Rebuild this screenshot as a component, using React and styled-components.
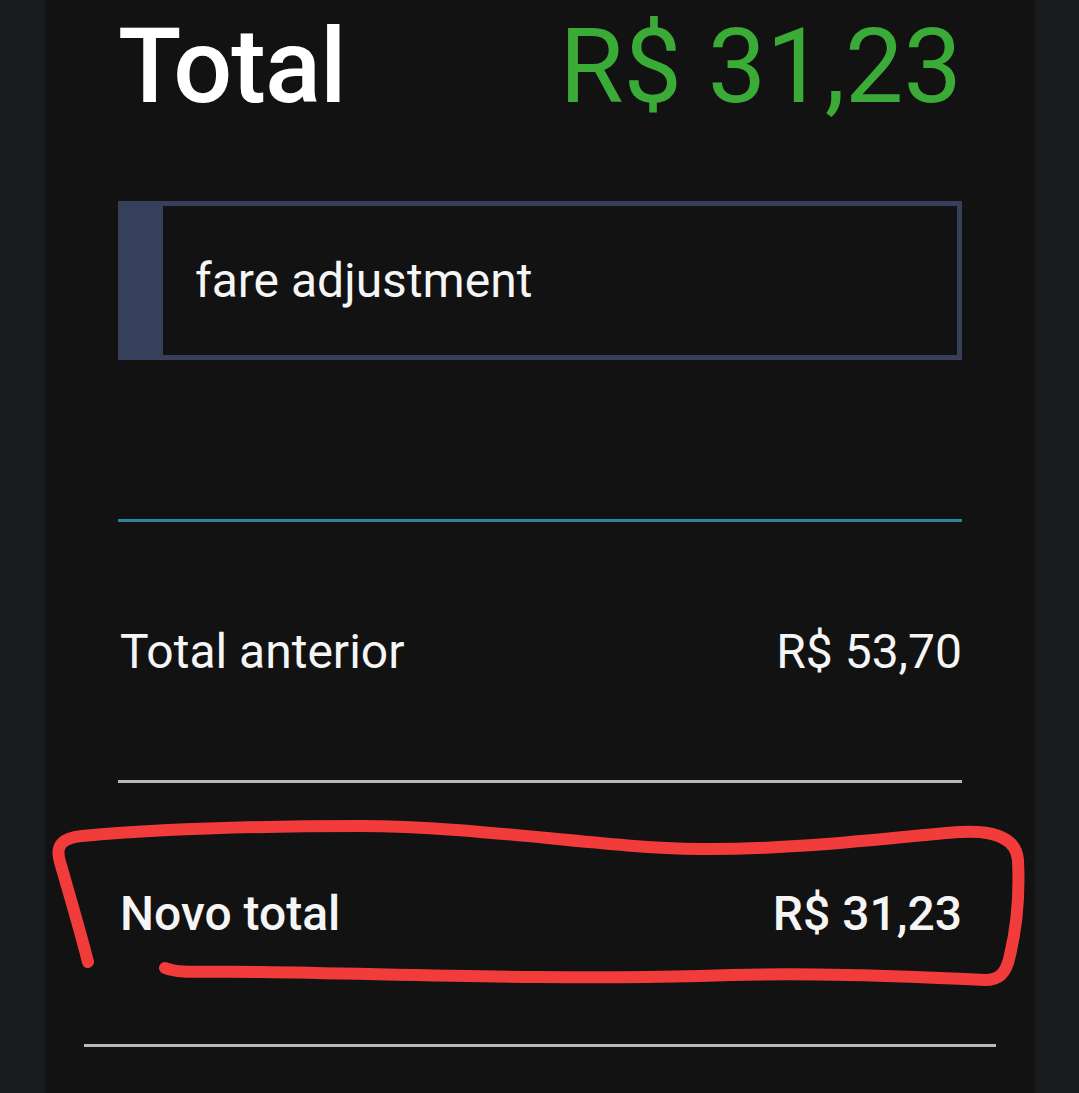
import React from 'react'
import styled, {createGlobalStyle} from 'styled-components'

const GlobalStyle = createGlobalStyle`
  html, body {
    margin: 0;
    padding: 0;
    background: #191c1f;
  }
  body {
    font-family: Roboto, "Liberation Sans", sans-serif;
    color: #f5f5f5;
  }
`

const Page = styled.div`
  position: relative;
  width: 1079px;
  height: 1093px;
  overflow: hidden;
`

const Column = styled.main`
  margin: 0 44px 0 45px;
  height: 1093px;
  background: #121212;
  padding: 15px 73px 0;
  box-sizing: border-box;
  display: flex;
  flex-direction: column;
`

const Header = styled.div`
  display: flex;
  justify-content: space-between;
  align-items: baseline;
  font-size: 104px;
  line-height: 104px;
`

const Title = styled.h1`
  margin: 0;
  font-size: inherit;
  font-weight: 500;
  color: #ffffff;
  letter-spacing: -1px;
`

const Amount = styled.span`
  color: #3aab36;
  font-weight: 400;
`

const Note = styled.div`
  margin-top: 82px;
  height: 159px;
  box-sizing: border-box;
  border: 5px solid #36405a;
  border-left-width: 45px;
  display: flex;
  align-items: center;
  padding-left: 32px;
  font-size: 48px;
  color: #f5f5f5;
  background: #121212;
`

const Spacer = styled.div`
  height: ${p => p.$height}px;
`

const Divider = styled.hr`
  margin: 0 ${p => p.$bleed || 0}px;
  border: none;
  height: 3px;
  background: ${p => p.$color};
`

const Row = styled.div`
  height: ${p => p.$height}px;
  display: flex;
  justify-content: space-between;
  align-items: center;
  font-size: 48px;
  font-weight: ${p => (p.$strong ? 500 : 400)};
  color: #f5f5f5;
  padding: 0 0 0 2px;
`

const Scribble = styled.svg`
  position: absolute;
  left: 0;
  top: 0;
  pointer-events: none;
`

export default function App() {
  return (
    <Page>
      <GlobalStyle />
      <Column>
        <Header>
          <Title>Total</Title>
          <Amount>R$ 31,23</Amount>
        </Header>
        <Note>fare adjustment</Note>
        <Spacer $height={159} />
        <Divider $color="#2a8699" />
        <Row $height={258}>
          <span>Total anterior</span>
          <span>R$ 53,70</span>
        </Row>
        <Divider $color="#b9b9b9" />
        <Row $height={261} $strong>
          <span>Novo total</span>
          <span>R$ 31,23</span>
        </Row>
        <Divider $color="#b9b9b9" $bleed={-34} />
      </Column>
      <Scribble width="1079" height="1093" viewBox="0 0 1079 1093">
        <path
          d="M88 962 C 80 930, 68 890, 60 862 C 55 845, 62 838, 82 836 C 150 830, 250 826, 360 826 C 480 826, 600 848, 700 849 C 800 850, 900 836, 960 832 C 995 830, 1016 838, 1018 860 C 1020 900, 1016 930, 1010 955 C 1006 975, 998 980, 985 980 C 900 976, 800 972, 700 976 C 550 980, 400 974, 260 972 C 200 971, 180 974, 165 968"
          fill="none"
          stroke="#f23b3b"
          strokeWidth="12"
          strokeLinecap="round"
          strokeLinejoin="round"
        />
      </Scribble>
    </Page>
  )
}
